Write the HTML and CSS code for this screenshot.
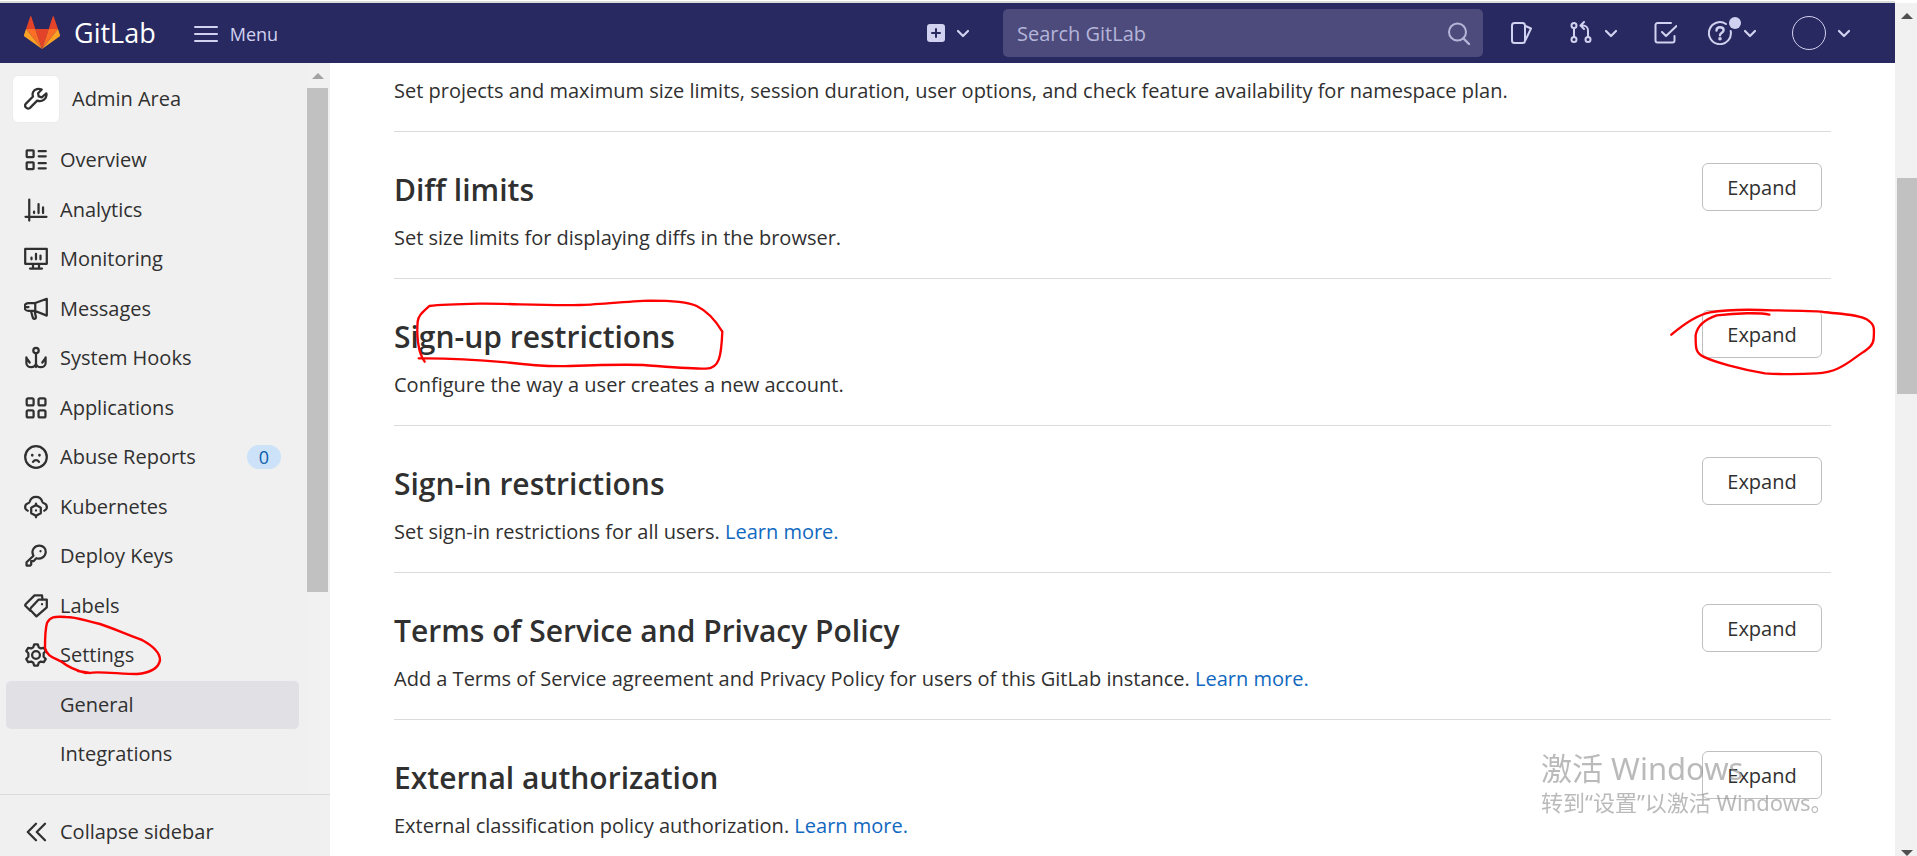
FILE: index.html
```html
<!DOCTYPE html>
<html lang="en">
<head>
  <meta charset="UTF-8">
  <meta name="viewport" content="width=device-width, initial-scale=1.0">
  <title>General · Settings · Admin Area · GitLab</title>
  <link rel="stylesheet" href="styles.css">
</head>
<body>
  <svg class="sprite" aria-hidden="true">
    <symbol id="chevron" viewBox="0 0 12 12"><path d="M1 4l5 5 5-5" stroke-width="2.2"/></symbol>
  </svg>

  <div class="page">
    <header class="navbar">
      <a class="brand" href="#">
        <svg class="tanuki" viewBox="0 0 36 34" aria-hidden="true">
          <path fill="#e24329" d="M18 33L11.300 13h13.400z"/>
          <path fill="#fc6d26" d="M18 33L11.300 13H2z"/>
          <path fill="#fca326" d="M2 13L0 19c-.2.700 0 1.200.500 1.600L18 33z"/>
          <path fill="#e24329" d="M2 13h9.300L7.400.700c-.2-.6-1-.6-1.200 0z"/>
          <path fill="#fc6d26" d="M18 33l6.700-20H34z"/>
          <path fill="#fca326" d="M34 13l2 6c.2.700 0 1.200-.5 1.600L18 33z"/>
          <path fill="#e24329" d="M34 13h-9.300L28.600.700c.2-.6 1-.6 1.200 0z"/>
        </svg>
        <span>GitLab</span>
      </a>
      <button class="menu-btn" type="button">
        <svg class="icon" viewBox="0 0 24 24"><path d="M1 5h22M1 12h22M1 19h22" stroke-width="2"/></svg>
        <span>Menu</span>
      </button>

      <div class="nav-tools">
        <button class="tool" type="button" aria-label="Create new">
          <svg class="icon-plus" viewBox="0 0 18 18"><rect width="18" height="18" rx="3"/><path d="M9 5v8M5 9h8"/></svg>
          <svg class="chevron"><use href="#chevron"/></svg>
        </button>
        <form class="search">
          <input type="text" placeholder="Search GitLab" aria-label="Search GitLab">
          <svg class="icon" viewBox="0 0 24 24"><circle cx="10.500" cy="11" r="8.500" stroke-width="2"/><path d="M16.500 17.500L22 23" stroke-width="2.400"/></svg>
        </form>
        <a class="tool" href="#" aria-label="Issues">
          <svg class="icon" viewBox="0 0 24 24"><rect x="3" y="2" width="13" height="20" rx="2.500"/><path d="M16.500 5l5.500 2.500L16.500 19"/></svg>
        </a>
        <button class="tool" type="button" aria-label="Merge requests">
          <svg class="icon" viewBox="0 0 24 24"><circle cx="5" cy="4.500" r="2.500"/><circle cx="5" cy="18.500" r="2.500"/><circle cx="19" cy="18.500" r="2.500"/><path d="M5 7v9M19 16V9.500a5 5 0 0 0-5-5h-1M15 1l-3.500 3.500L15 8"/></svg>
          <svg class="chevron"><use href="#chevron"/></svg>
        </button>
        <a class="tool" href="#" aria-label="To-Do List">
          <svg class="icon" viewBox="0 0 24 24"><path d="M18 2H4.500A2 2 0 0 0 2.500 4v15.500a2 2 0 0 0 2 2h15a2 2 0 0 0 2-2V15M9 11l4 4L23.500 5"/></svg>
        </a>
        <button class="tool help" type="button" aria-label="Help">
          <svg class="icon" viewBox="0 0 24 24"><path d="M18 3a11 11 0 1 0 4.700 7"/><path d="M8.500 9.500c0-2 1.500-3.300 3.500-3.300s3.600 1.200 3.600 3c0 2.400-3.600 2.600-3.600 5" stroke-width="2.400"/><circle cx="12" cy="17.800" r=".8"/></svg>
          <svg class="chevron"><use href="#chevron"/></svg>
          <span class="dot"></span>
        </button>
        <button class="tool" type="button" aria-label="Account">
          <span class="avatar"></span>
          <svg class="chevron"><use href="#chevron"/></svg>
        </button>
      </div>
    </header>

    <div class="body">
      <aside class="sidebar">
        <div class="sidebar-scroll">
          <nav class="sidebar-nav">
            <a class="context" href="#">
              <span class="context-icon">
                <svg class="icon" viewBox="0 0 16 16"><path d="M14.900 4.300l-3.100 2.600-2-.6-.4-2.100 2.400-2.500C9.700.700 7.100 1.300 6.100 3.300c-.5 1-.5 2-.1 3L1.300 11.100c-1.600 1.700.8 4.400 2.700 2.800l4.800-4.800c3.300 1.300 6.900-1.500 6.100-4.800z"/></svg>
              </span>
              Admin Area
            </a>
            <ul class="items">
              <li><a href="#"><svg class="icon" viewBox="0 0 16 16"><rect x="1.800" y="1.500" width="4.600" height="4.600" rx=".4"/><rect x="1.800" y="9.500" width="4.600" height="4.600" rx=".4"/><path d="M9.800 2.100h4.700M9.800 5.500h4.700M9.800 10.100h4.700M9.800 13.500h4.700"/></svg>Overview</a></li>
              <li><a href="#"><svg class="icon" viewBox="0 0 16 16"><path d="M3.500 1v14M1 12.500h14M6.700 10V9M9.700 10V4M12.700 10V6.300"/></svg>Analytics</a></li>
              <li><a href="#"><svg class="icon" viewBox="0 0 16 16"><path d="M.8 1.300h14.400v9.900H.8zM6 11.200V14M10 11.200V14M4 14.400h8M5 8.200V7M8 8.200V4.500M11 8.200V5.700"/></svg>Monitoring</a></li>
              <li><a href="#"><svg class="icon" viewBox="0 0 16 16"><path d="M15.200 1.200v11.200L7.500 9.300H3A2.600 2.600 0 0 1 3 4h4.500zM7.500 4v5.300M1 6.700h2M4.700 9.500l1.200 4.300c.4 1.300 2.300.9 2-.6l-.8-3.700"/></svg>Messages</a></li>
              <li><a href="#"><svg class="icon" viewBox="0 0 16 16"><circle cx="8" cy="3" r="1.800"/><path d="M8 4.800V14M1.600 7.500v3.800c0 3.800 6.400 3.800 6.400 0 0 3.800 6.400 3.800 6.400 0V7.500M1.600 8l2.200 3M14.400 8l-2.200 3"/></svg>System Hooks</a></li>
              <li><a href="#"><svg class="icon" viewBox="0 0 16 16"><rect x="1.800" y="1.500" width="4.600" height="4.800" rx="1"/><rect x="9.700" y="1.500" width="4.600" height="4.800" rx="1"/><rect x="1.800" y="9.500" width="4.600" height="4.800" rx="1"/><rect x="9.700" y="9.500" width="4.600" height="4.800" rx="1"/></svg>Applications</a></li>
              <li><a href="#"><svg class="icon" viewBox="0 0 16 16"><circle cx="8" cy="8" r="7.200"/><path d="M5.500 6.800v.1M10.300 6.800v.1" stroke-width="1.800"/><path d="M6 11.200c1-1.500 3-1.500 4 0"/></svg>Abuse Reports<span class="badge">0</span></a></li>
              <li><a href="#"><svg class="icon" viewBox="0 0 16 16"><path d="M2.500 10.500C.2 9.700.1 6.300 2.700 5.500c.7-.1.900-.4 1.100-1C5 .200 11 .200 12.200 4.500c.2.600.4.900 1.100 1 2.600.8 2.500 4.200.2 5"/><path d="M8 6.700l3.200 1.800v3.600L8 13.900l-3.200-1.800V8.500z"/><path d="M8 5.700v1M8 13.900v1M8 10.300v.1"/></svg>Kubernetes</a></li>
              <li><a href="#"><svg class="icon" viewBox="0 0 16 16"><path d="M6.300 7.800C4.300 3.800 7.500 1 10.300 1c2.500 0 4.400 2.100 4.200 4.500-.3 3-3.300 5-6.300 4l-1.700 1.900H4.800v2.300l-.8.700H1.700v-2.200z"/><path d="M11 4.800v.1"/></svg>Deploy Keys</a></li>
              <li><a href="#"><svg class="icon" viewBox="0 0 16 16"><path d="M8.300 14.900L4.500 11c-.5-.6-.5-1.100 0-1.600l5.300-5.700h5.400v5.200z"/><path d="M12.300 3.500L12 .900H7L1.200 6.700c-.5.500-.5 1 0 1.500l3 3M12 6.800v.1"/></svg>Labels</a></li>
              <li class="marked">
                <a class="medium" href="#"><svg class="icon" viewBox="0 0 16 16"><path d="M6.200 2.800L6.800.900h2.400l.6 1.900 1.400.8 2-.4 1.300 2.100-1.400 1.500v2.400l1.400 1.500-1.300 2.100-2-.4-1.400.8-.6 1.900H6.800l-.6-1.900-1.400-.8-2 .4-1.300-2.100 1.400-1.500V6.800L1.500 5.300l1.300-2.100 2 .4z"/><circle cx="8" cy="8" r="2.600"/></svg>Settings</a>
                <svg class="scribble scribble-settings" viewBox="0 610 180 70" aria-hidden="true"><path stroke-width="2.400" d="M78 671l12 2C95 671 122 674 137 674C150 673 159 668 160 660C160 652 153 646 142 640C128 635 110 627 100 624C85 621 78 617 66 617C54 616 50 617 47 623C45 630 45 640 45 648C47 657 55 658 62 662C68 667 78 671 86 673"/></svg>
              </li>
              <li class="sub active"><a class="medium" href="#">General</a></li>
              <li class="sub"><a href="#">Integrations</a></li>
            </ul>
          </nav>
          <div class="scrollbar inner"><span class="arrow up"></span><span class="thumb"></span></div>
        </div>
        <button class="collapse" type="button">
          <svg class="icon" viewBox="0 0 16 16"><path d="M8 2.500L2.500 8 8 13.500M14 2.500L8.500 8l5.500 5.500"/></svg>
          Collapse sidebar
        </button>
      </aside>

      <main class="content">
        <section class="setting first">
          <p>Set projects and maximum size limits, session duration, user options, and check feature availability for namespace plan.</p>
        </section>
        <section class="setting">
          <div class="text">
            <h4>Diff limits</h4>
            <p>Set size limits for displaying diffs in the browser.</p>
          </div>
          <button class="btn" type="button">Expand</button>
        </section>
        <section class="setting">
          <div class="text">
            <h4>Sign-up restrictions</h4>
            <p>Configure the way a user creates a new account.</p>
          </div>
          <button class="btn" type="button">Expand</button>
          <svg class="scribble scribble-title" viewBox="42 -3 1020 300" aria-hidden="true"><path stroke-width="7" d="M116 235C200 234 300 240 380 247C450 256 520 260 570 258C650 255 740 253 790 255C860 260 930 266 975 266C1020 268 1024 225 1027 155C1012 130 985 95 950 78C915 62 850 62 810 62C740 64 640 75 600 75C500 78 380 70 300 71C250 72 180 74 148 78C130 95 115 105 113 125C110 160 112 215 134 245"/></svg>
          <svg class="scribble scribble-expand" viewBox="75 -3 675 300" aria-hidden="true"><path stroke-width="7" d="M94 164C140 125 180 103 210 97C260 88 330 88 400 91C480 92 530 93 550 96C600 102 650 102 680 118C705 134 703 145 701 175C700 200 680 208 650 230C610 260 580 278 530 280C480 283 420 283 375 280C300 268 220 245 190 230C165 218 167 200 167 165C172 135 195 118 230 106C290 99 360 97 388 104"/></svg>
        </section>
        <section class="setting">
          <div class="text">
            <h4>Sign-in restrictions</h4>
            <p>Set sign-in restrictions for all users. <a href="#">Learn more.</a></p>
          </div>
          <button class="btn" type="button">Expand</button>
        </section>
        <section class="setting">
          <div class="text">
            <h4>Terms of Service and Privacy Policy</h4>
            <p>Add a Terms of Service agreement and Privacy Policy for users of this GitLab instance. <a href="#">Learn more.</a></p>
          </div>
          <button class="btn" type="button">Expand</button>
        </section>
        <section class="setting">
          <div class="text">
            <h4>External authorization</h4>
            <p>External classification policy authorization. <a href="#">Learn more.</a></p>
          </div>
          <button class="btn" type="button">Expand</button>
        </section>
      </main>
    </div>
  </div>

  <div class="scrollbar outer"><span class="arrow up"></span><span class="thumb"></span><span class="arrow down"></span></div>

  <div class="watermark" lang="zh-CN">
    <p class="watermark-title">激活 Windows</p>
    <p class="watermark-text">转到“设置”以激活 Windows。</p>
  </div>
</body>
</html>
```
FILE: styles.css
```css
* {
  box-sizing: border-box;
}

body {
  margin: 0;
  height: 100vh;
  overflow: hidden;
  display: flex;
  background: #fff;
  color: #303030;
  font-family: "Open Sans", "Noto Sans", sans-serif;
  font-size: 20px;
  line-height: 28px;
}

a {
  color: inherit;
  text-decoration: none;
}

button {
  font: inherit;
  color: inherit;
  background: none;
  border: 0;
  padding: 0;
  cursor: pointer;
}

h4, p, ul {
  margin: 0;
  padding: 0;
}

svg {
  fill: none;
  stroke: currentColor;
  stroke-linecap: round;
  stroke-linejoin: round;
}

.sprite {
  display: none;
}

.icon {
  width: 24px;
  height: 24px;
  flex: none;
}

.chevron {
  width: 12px;
  height: 12px;
  flex: none;
}

.page {
  flex: 1;
  min-width: 0;
  display: flex;
  flex-direction: column;
  border-top: 2px solid #dadcdc;
  margin-top: 1px;
}

/* top bar */
.navbar {
  height: 60px;
  flex: none;
  display: flex;
  align-items: center;
  padding: 0 45px 0 24px;
  background: #292961;
  color: #d1d1f0;
}

.brand {
  display: flex;
  align-items: center;
  gap: 14px;
  color: #fff;
  font-size: 27px;
}

.tanuki {
  width: 36px;
  height: 34px;
  stroke: none;
}

.menu-btn {
  display: flex;
  align-items: center;
  gap: 12px;
  margin-left: 38px;
  padding-top: 1px;
  font-size: 18px;
  font-weight: 500;
}

.nav-tools {
  flex: 1;
  display: flex;
  align-items: center;
  justify-content: flex-end;
  gap: 36px;
}

.tool {
  position: relative;
  display: flex;
  align-items: center;
  gap: 12px;
}

.tool .icon {
  stroke-width: 2;
}

.icon-plus {
  width: 18px;
  height: 18px;
}

.icon-plus rect {
  fill: #d1d1f0;
  stroke: none;
}

.icon-plus path {
  stroke: #292961;
  stroke-width: 2;
}

.search {
  flex: 0 1 480px;
  height: 48px;
  display: flex;
  align-items: center;
  margin: 0 -10px 0 -2px;
  padding: 0 12px 0 14px;
  border-radius: 5px;
  background: #4c4b7c;
  color: #b5b5d9;
}

.search input {
  flex: 1;
  min-width: 0;
  padding: 2px 0 0;
  border: 0;
  outline: 0;
  background: none;
  color: inherit;
  font: inherit;
}

.search input::placeholder {
  color: inherit;
  opacity: 1;
}

.help {
  margin-left: -5px;
}

.dot {
  position: absolute;
  top: -4px;
  left: 21px;
  width: 12px;
  height: 12px;
  border-radius: 50%;
  background: #d1d1f0;
}

.avatar {
  width: 34px;
  height: 34px;
  border: 1px solid #d1d1f0;
  border-radius: 50%;
}

/* sidebar */
.body {
  flex: 1;
  min-height: 0;
  display: flex;
}

.sidebar {
  width: 330px;
  flex: none;
  display: flex;
  flex-direction: column;
  background: #f0f0f0;
}

.sidebar-scroll {
  flex: 1;
  min-height: 0;
  display: flex;
}

.sidebar-nav {
  flex: 1;
  display: flex;
  flex-direction: column;
  padding: 12px 8px 16px 6px;
}

.context {
  display: flex;
  align-items: center;
  gap: 12px;
  padding-left: 6px;
  margin-bottom: 13px;
  font-weight: 500;
}

.context-icon {
  width: 48px;
  height: 48px;
  display: grid;
  place-items: center;
  border: 1px solid #ececec;
  border-radius: 6px;
  background: #fff;
}

.items {
  flex: 1;
  display: flex;
  flex-direction: column;
  justify-content: space-between;
  list-style: none;
}

.items li {
  border-radius: 5px;
}

.items a {
  height: 48px;
  display: flex;
  align-items: center;
  gap: 12px;
  padding: 0 18px;
}

.context .icon,
.items .icon,
.collapse .icon {
  stroke-width: 1.5;
}

.items .sub a {
  padding-left: 54px;
}

.items .medium {
  font-weight: 500;
}

.items .active {
  background: #e1e0e5;
}

.badge {
  margin-left: auto;
  width: 34px;
  height: 24px;
  border-radius: 12px;
  background: #cbe2f9;
  color: #0b5cad;
  font-size: 18px;
  line-height: 24px;
  text-align: center;
}

.collapse {
  height: 62px;
  display: flex;
  align-items: center;
  gap: 12px;
  padding: 12px 24px 0;
  border-top: 1px solid #dbdbdb;
}

/* scrollbars */
.scrollbar {
  flex: none;
  display: flex;
  flex-direction: column;
  align-items: center;
  background: #f1f1f1;
}

.scrollbar .thumb {
  background: #c1c1c1;
}

.arrow {
  border: 6px solid transparent;
  border-top-width: 0;
  border-bottom: 6px solid #a3a3a3;
}

.arrow.down {
  border-top: 6px solid #505050;
  border-bottom-width: 0;
  margin-top: auto;
}

.inner {
  width: 23px;
  padding: 10px 2px 0 0;
}

.inner .thumb {
  width: 21px;
  height: 504px;
  margin-top: 9px;
}

.outer {
  width: 22px;
  margin-top: 3px;
  padding: 10px 0 0 2px;
}

.outer .up {
  border-bottom-color: #505050;
}

.outer .thumb {
  width: 20px;
  height: 216px;
  margin-top: 159px;
}

/* settings list */
.content {
  flex: 1;
  min-width: 0;
  overflow: hidden;
  padding: 0 64px;
}

.setting {
  position: relative;
  min-height: 147px;
  display: flex;
  align-items: flex-start;
  justify-content: space-between;
  padding: 31px 9px 0 0;
  border-bottom: 1px solid #dbdbdb;
}

.setting.first {
  min-height: 69px;
  padding-top: 14px;
}

.setting h4 {
  margin-bottom: 7px;
  font-size: 30px;
  font-weight: 600;
  line-height: 54px;
}

.setting p a {
  color: #1068bf;
}

.btn {
  width: 120px;
  height: 48px;
  padding-top: 2px;
  border: 1px solid #bfbfbf;
  border-radius: 6px;
  background: #fff;
}

/* red pen marks */
.scribble {
  position: absolute;
  stroke: #f00;
  pointer-events: none;
}

.marked {
  position: relative;
}

.scribble-settings {
  top: -21px;
  left: -6px;
  width: 180px;
  height: 70px;
}

.scribble-title {
  top: 0;
  left: 0;
  width: 340px;
  height: 100px;
}

.scribble-expand {
  top: 0;
  right: -59px;
  width: 225px;
  height: 100px;
}

.watermark {
  position: fixed;
  right: 90px;
  bottom: 39px;
  width: 286px;
  color: rgba(140, 140, 140, 0.6);
  font-family: "Noto Sans", "Noto Sans CJK SC", sans-serif;
  white-space: nowrap;
  pointer-events: none;
}

.watermark-title {
  font-size: 31px;
  line-height: 38px;
}

.watermark-text {
  font-size: 22px;
  line-height: 30px;
}
```
